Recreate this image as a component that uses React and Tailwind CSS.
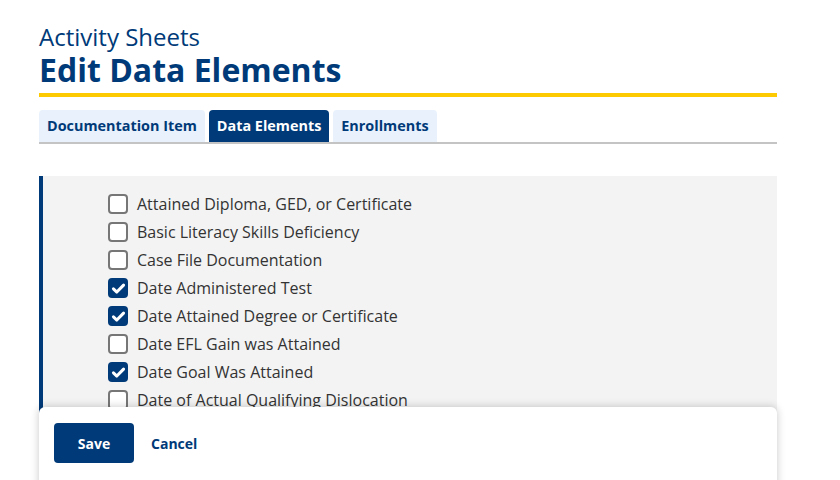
import React, { useState } from 'react';

const ITEMS = [
  { label: 'Attained Diploma, GED, or Certificate', checked: false },
  { label: 'Basic Literacy Skills Deficiency', checked: false },
  { label: 'Case File Documentation', checked: false },
  { label: 'Date Administered Test', checked: true },
  { label: 'Date Attained Degree or Certificate', checked: true },
  { label: 'Date EFL Gain was Attained', checked: false },
  { label: 'Date Goal Was Attained', checked: true },
  { label: 'Date of Actual Qualifying Dislocation', checked: false },
];

function Checkbox({ checked, onChange }) {
  return (
    <button
      type="button"
      onClick={onChange}
      className={`w-[20px] h-[20px] shrink-0 rounded-[4px] flex items-center justify-center ${
        checked ? 'bg-[#003a78]' : 'bg-white border-2 border-[#767676]'
      }`}
    >
      {checked && (
        <svg viewBox="0 0 16 16" className="w-[15px] h-[15px]">
          <path d="M2.6 8.4 L6.2 11.8 L13.4 4.4" fill="none" stroke="white" strokeWidth="3.2" strokeLinecap="round" strokeLinejoin="round" />
        </svg>
      )}
    </button>
  );
}

export default function App() {
  const [items, setItems] = useState(ITEMS);
  const tabs = ['Documentation Item', 'Data Elements', 'Enrollments'];

  const toggle = (i) =>
    setItems(items.map((it, idx) => (idx === i ? { ...it, checked: !it.checked } : it)));

  return (
    <div className="relative h-[480px] overflow-hidden bg-white font-['Open_Sans',sans-serif]">
      <div className="ml-[39px] w-[738px] pt-[23px]">
        {/* Heading */}
        <div className="text-[24px] leading-[28px] text-[#003a78] font-normal">Activity Sheets</div>
        <h1 className="text-[32px] leading-[38px] font-bold text-[#003a78]">Edit Data Elements</h1>
        <div className="h-[4px] bg-[#fdc900] mt-[4px]" />

        {/* Tabs */}
        <div className="flex gap-[4px] mt-[13px] border-b-2 border-[#c4c4c4]">
          {tabs.map((t) => (
            <div
              key={t}
              className={`h-[32px] px-[8px] flex items-center rounded-t-[4px] text-[14.4px] font-bold ${
                t === 'Data Elements' ? 'bg-[#003a78] text-white' : 'bg-[#e8f1fc] text-[#003a78]'
              }`}
            >
              {t}
            </div>
          ))}
        </div>

        {/* Checkbox panel */}
        <div className="mt-[32px] bg-[#f3f3f3] border-l-4 border-[#003a78] pl-[65px] pt-[14px] pb-[80px]">
          {items.map((it, i) => (
            <label key={it.label} className="flex items-center gap-[9px] h-[28px] text-[16px] text-[#333333]">
              <Checkbox checked={it.checked} onChange={() => toggle(i)} />
              <span>{it.label}</span>
            </label>
          ))}
        </div>
      </div>

      {/* Sticky action bar */}
      <div className="absolute left-[39px] top-[407px] w-[738px] h-[90px] bg-white rounded-t-[6px] shadow-[0_0_8px_rgba(0,0,0,0.22)] flex items-start gap-[17px] pl-[15px] pt-[16px]">
        <button className="w-[80px] h-[40px] rounded-[4px] bg-[#003a78] text-white text-[14px] font-bold">Save</button>
        <button className="h-[40px] text-[14px] font-bold text-[#003a78]">Cancel</button>
      </div>
    </div>
  );
}
